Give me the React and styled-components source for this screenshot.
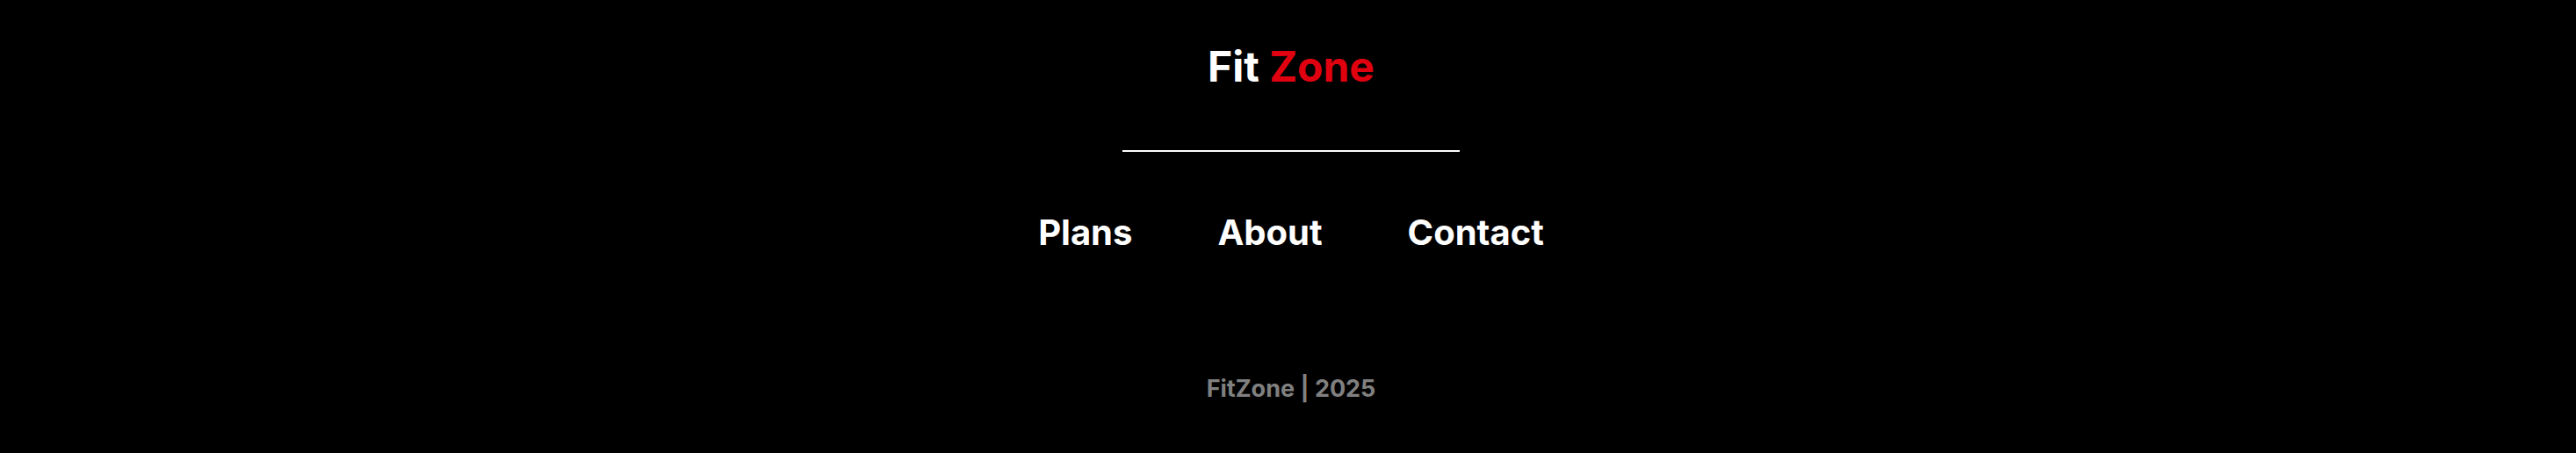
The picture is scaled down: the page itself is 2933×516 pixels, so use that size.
import React from "react";
import styled, { createGlobalStyle } from "styled-components";

const GlobalStyle = createGlobalStyle`
  html, body {
    margin: 0;
    padding: 0;
    background: #000;
  }
  body {
    font-family: Inter, "Liberation Sans", sans-serif;
  }
`;

const Footer = styled.footer`
  background: #000;
  color: #fff;
  height: 516px;
  display: flex;
  flex-direction: column;
  align-items: center;
  padding-left: 7px;
  box-sizing: border-box;
`;

const Brand = styled.h2`
  margin: 46.5px 0 0;
  font-size: 48px;
  font-weight: 700;
  line-height: 58px;
  color: #fff;
`;

const Red = styled.span`
  color: #e0000f;
`;

const Divider = styled.hr`
  width: 384px;
  height: 2px;
  border: none;
  background: #fff;
  margin: 66px 0 0;
`;

const Nav = styled.ul`
  list-style: none;
  display: flex;
  gap: 97px;
  margin: 68px 0 0;
  padding: 0;
`;

const NavItem = styled.li`
  font-size: 40px;
  font-weight: 700;
  line-height: 48px;
`;

const Copy = styled.p`
  margin: 138px 0 0;
  font-size: 27px;
  font-weight: 700;
  line-height: 32px;
  color: #808080;
`;

export default function App() {
  return (
    <>
      <GlobalStyle />
      <Footer>
        <Brand>
          Fit <Red>Zone</Red>
        </Brand>
        <Divider />
        <Nav>
          <NavItem>Plans</NavItem>
          <NavItem>About</NavItem>
          <NavItem>Contact</NavItem>
        </Nav>
        <Copy>FitZone | 2025</Copy>
      </Footer>
    </>
  );
}
